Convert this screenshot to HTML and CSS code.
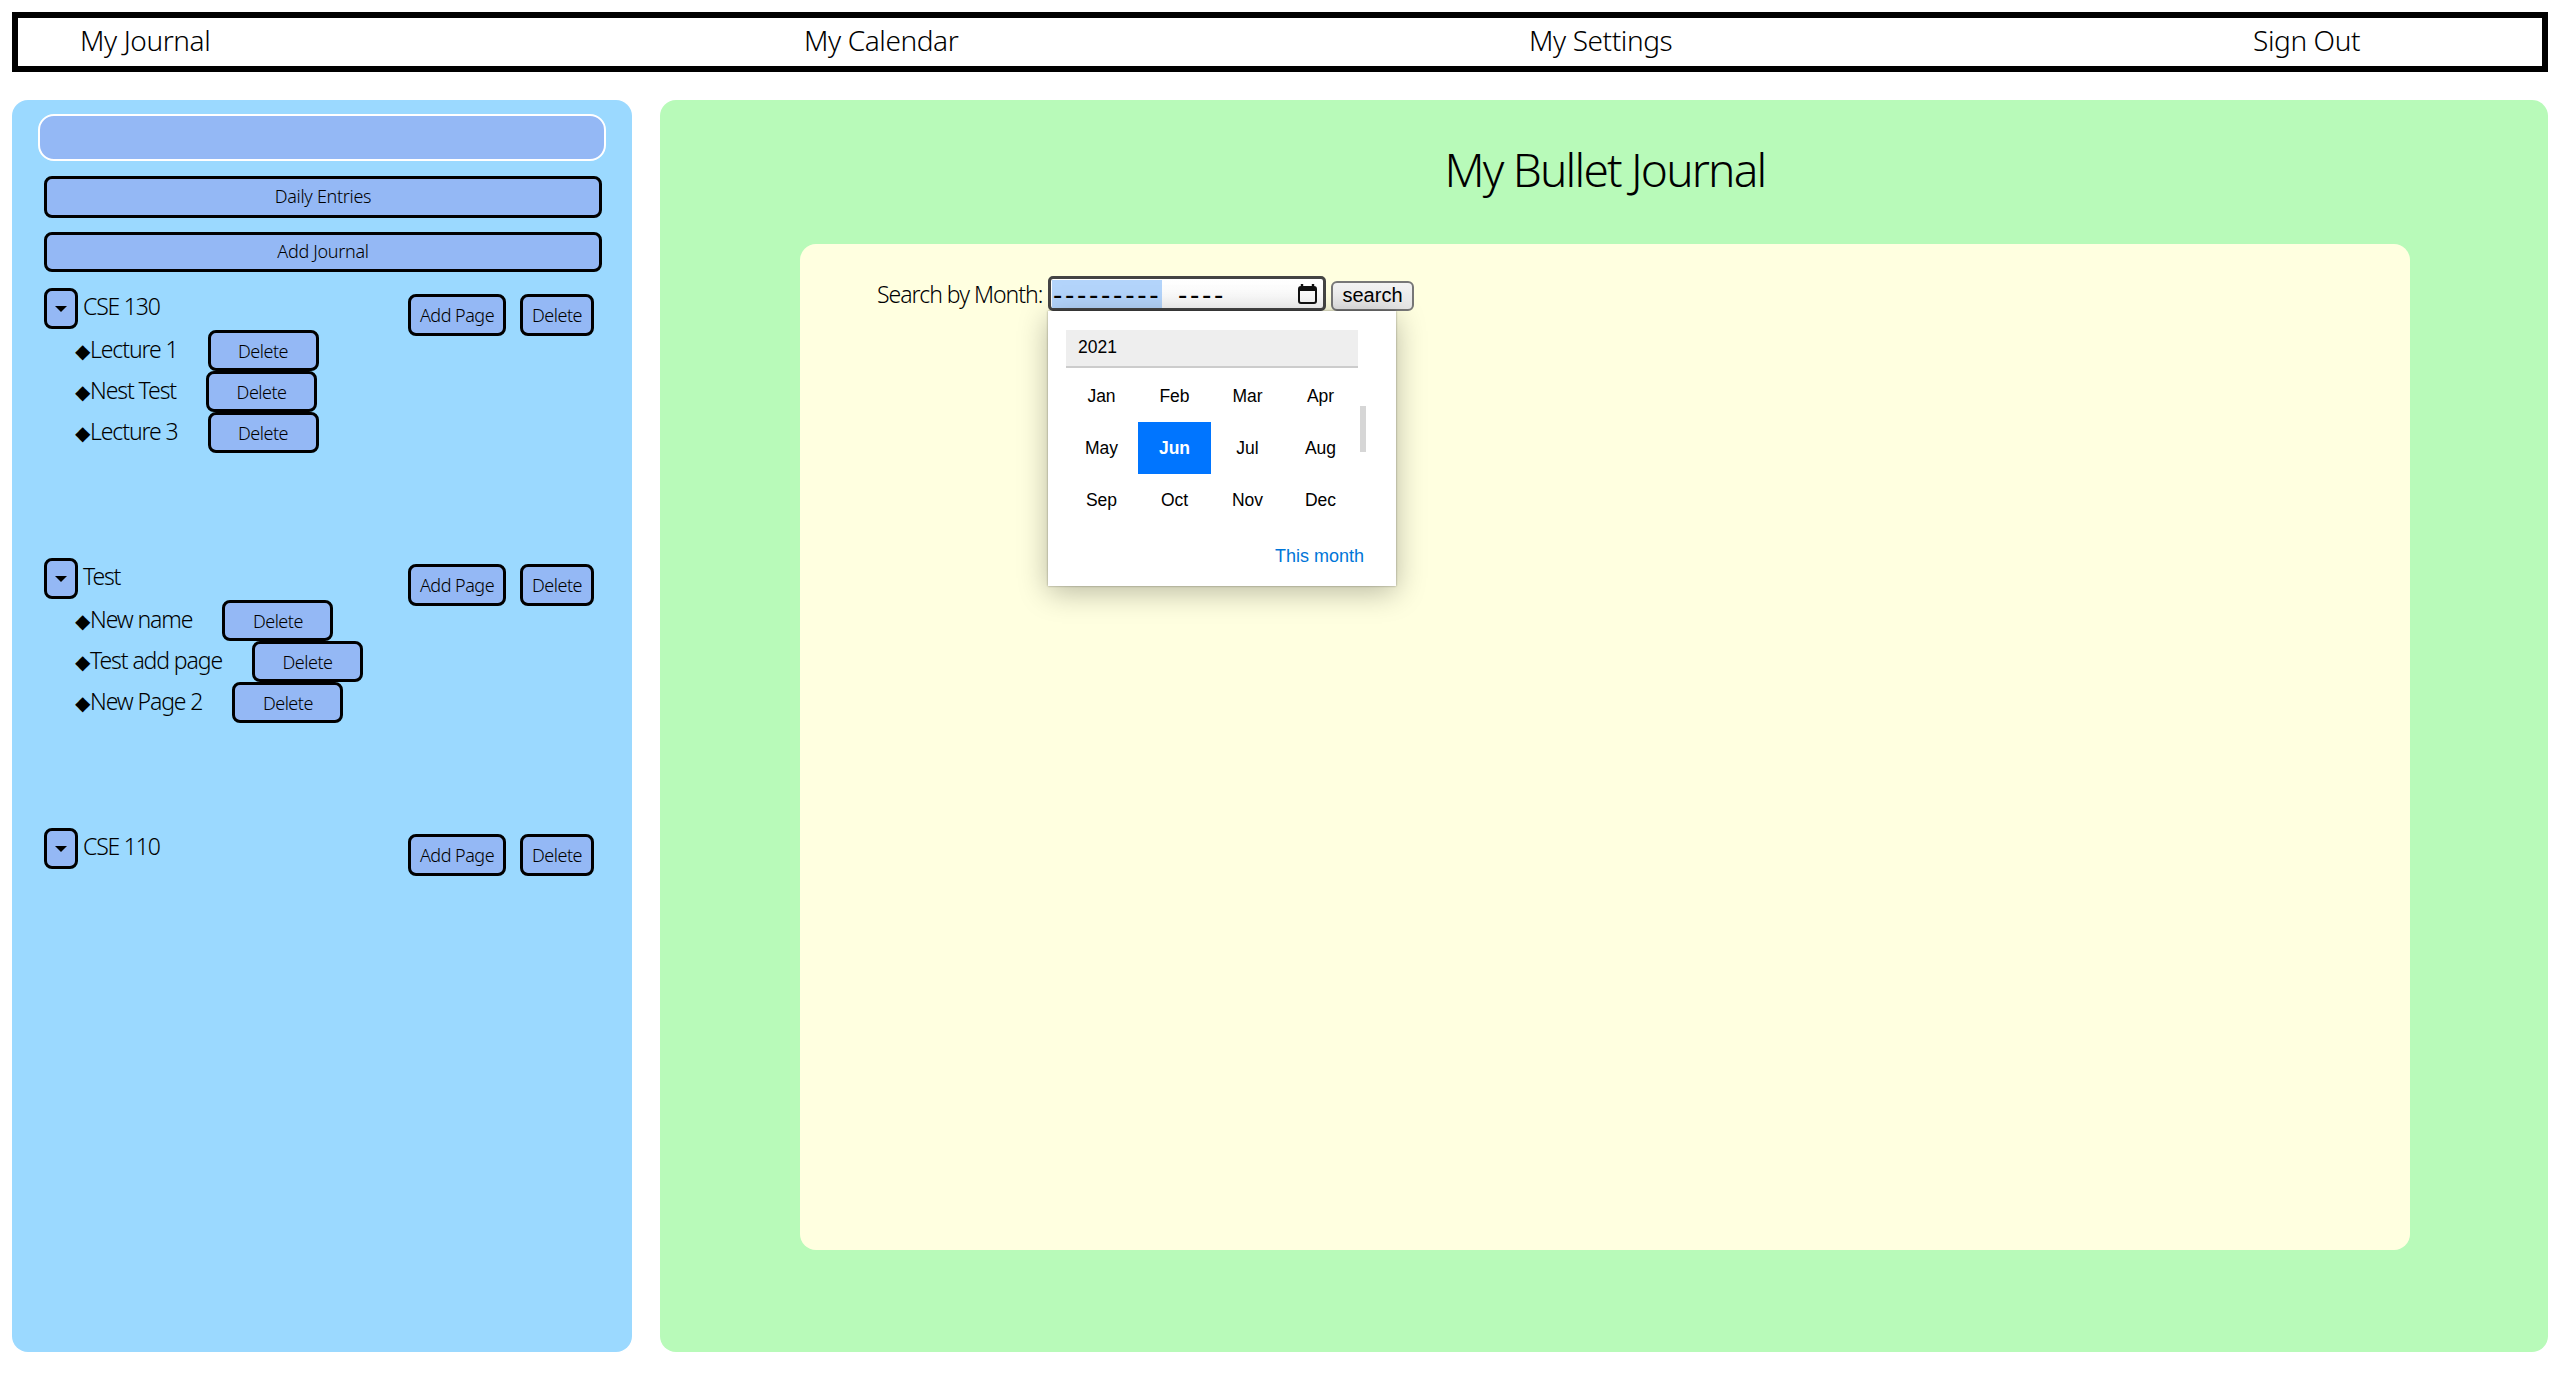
FILE: index.html
```html
<!DOCTYPE html>
<html>
<head>
	<title>My Bullet Journal</title>
	<link rel="stylesheet" href="styles.css">
</head>
<body>
	<nav class="topnav">
		<a>My Journal</a>
		<a>My Calendar</a>
		<a>My Settings</a>
		<a>Sign Out</a>
	</nav>
	<div class="content">
		<aside class="sidebar">
			<input class="sidebar-search" type="text">
			<button class="wide-btn first">Daily Entries</button>
			<button class="wide-btn">Add Journal</button>

			<section class="journal">
				<div class="journal-head">
					<button class="toggle"><span class="caret"></span></button>
					<span class="journal-name">CSE 130</span>
					<div class="journal-actions">
						<button class="small-btn add">Add Page</button>
						<button class="small-btn">Delete</button>
					</div>
				</div>
				<div class="page-row"><span class="page-name"><span class="bullet">◆</span>Lecture 1</span><button class="page-btn">Delete</button></div>
				<div class="page-row"><span class="page-name"><span class="bullet">◆</span>Nest Test</span><button class="page-btn">Delete</button></div>
				<div class="page-row"><span class="page-name"><span class="bullet">◆</span>Lecture 3</span><button class="page-btn">Delete</button></div>
			</section>

			<section class="journal">
				<div class="journal-head">
					<button class="toggle"><span class="caret"></span></button>
					<span class="journal-name">Test</span>
					<div class="journal-actions">
						<button class="small-btn add">Add Page</button>
						<button class="small-btn">Delete</button>
					</div>
				</div>
				<div class="page-row"><span class="page-name"><span class="bullet">◆</span>New name</span><button class="page-btn">Delete</button></div>
				<div class="page-row"><span class="page-name"><span class="bullet">◆</span>Test add page</span><button class="page-btn">Delete</button></div>
				<div class="page-row"><span class="page-name"><span class="bullet">◆</span>New Page 2</span><button class="page-btn">Delete</button></div>
			</section>

			<section class="journal">
				<div class="journal-head">
					<button class="toggle"><span class="caret"></span></button>
					<span class="journal-name">CSE 110</span>
					<div class="journal-actions">
						<button class="small-btn add">Add Page</button>
						<button class="small-btn">Delete</button>
					</div>
				</div>
			</section>
		</aside>

		<main class="journal-main">
			<h1>My Bullet Journal</h1>
			<div class="sheet">
				<div class="month-search">
					<label>Search by Month:</label>
					<div class="month-field">
						<div class="month-input">
							<span class="month-part">---------</span>
							<span class="year-part">----</span>
							<svg class="cal-icon" width="19" height="20" viewBox="0 0 19 20">
								<path d="M4 0v3M15 0v3" stroke="#111" stroke-width="2.4" fill="none"/>
								<rect x="1" y="3" width="17" height="16" rx="2" fill="none" stroke="#111" stroke-width="2"/>
								<rect x="1" y="3" width="17" height="4" fill="#111"/>
							</svg>
						</div>
						<div class="month-popup">
							<div class="popup-year">2021</div>
							<div class="popup-months">
								<span>Jan</span><span>Feb</span><span>Mar</span><span>Apr</span>
								<span>May</span><span class="selected">Jun</span><span>Jul</span><span>Aug</span>
								<span>Sep</span><span>Oct</span><span>Nov</span><span>Dec</span>
							</div>
							<div class="popup-foot">This month</div>
							<div class="popup-scroll"></div>
						</div>
					</div>
					<button class="search-btn">search</button>
				</div>
			</div>
		</main>
	</div>
</body>
</html>
```

FILE: styles.css
```css
* {
	box-sizing: border-box;
}

body {
	margin: 0;
	padding: 12px;
	font-family: "Noto Sans", sans-serif;
	font-weight: 300;
	color: #000;
	background-color: #fff;
}

button {
	font-family: inherit;
	font-weight: 350;
	color: #000;
	padding: 0;
	cursor: pointer;
}

.topnav {
	display: grid;
	grid-template-columns: 724px 725px 724px 1fr;
	align-items: center;
	height: 60px;
	padding: 0 0 4px 62px;
	border: 6px solid #000;
	font-size: 28px;
	letter-spacing: -0.4px;
}

.content {
	display: flex;
	gap: 28px;
	margin-top: 28px;
	height: 1252px;
}

.sidebar {
	width: 620px;
	flex: none;
	padding: 14px 38px 0 32px;
	background-color: #9bd9ff;
	border-radius: 16px;
}

.sidebar-search {
	display: block;
	width: 568px;
	height: 47px;
	margin-left: -6px;
	background-color: #94b8f5;
	border: 2px solid #fff;
	border-radius: 16px;
}

.wide-btn {
	display: block;
	width: 558px;
	height: 40px;
	margin-top: 14px;
	padding-bottom: 3px;
	background-color: #94b8f5;
	border: 3px solid #000;
	border-radius: 8px;
	font-size: 18px;
	letter-spacing: -0.3px;
}

.wide-btn.first {
	height: 42px;
	margin-top: 15px;
}

.journal {
	height: 270px;
}

.journal:first-of-type {
	margin-top: 16px;
}

.journal-head {
	display: flex;
	height: 42px;
}

.toggle {
	display: flex;
	align-items: center;
	justify-content: center;
	width: 34px;
	height: 41px;
	background-color: #94b8f5;
	border: 3px solid #000;
	border-radius: 8px;
}

.caret {
	width: 0;
	height: 0;
	border-left: 6px solid transparent;
	border-right: 6px solid transparent;
	border-top: 6px solid #000;
}

.journal-name {
	margin-left: 5px;
	font-size: 23px;
	line-height: 36px;
	letter-spacing: -1.2px;
}

.journal-actions {
	display: flex;
	gap: 14px;
	margin-left: auto;
	margin-top: 6px;
}

.small-btn {
	width: 74px;
	height: 42px;
	background-color: #94b8f5;
	border: 3px solid #000;
	border-radius: 8px;
	font-size: 18px;
	letter-spacing: -0.5px;
}

.small-btn.add {
	width: 98px;
}

.page-row {
	display: flex;
	align-items: center;
	gap: 30px;
	height: 41px;
	padding-left: 31px;
}

.page-name {
	margin-bottom: 3px;
	font-size: 23px;
	letter-spacing: -1.1px;
}

.bullet {
	font-family: "DejaVu Sans", sans-serif;
	font-size: 20px;
	line-height: 1;
	letter-spacing: 0;
}

.page-btn {
	width: 111px;
	height: 41px;
	background-color: #94b8f5;
	border: 3px solid #000;
	border-radius: 8px;
	font-size: 18px;
	letter-spacing: -0.5px;
}

.journal-main {
	flex: 1;
	padding: 0 138px 0 140px;
	background-color: #b8fab9;
	border-radius: 16px;
}

.journal-main h1 {
	margin: 0;
	height: 144px;
	padding-top: 34px;
	text-align: center;
	font-size: 46px;
	font-weight: 300;
	line-height: 70px;
	letter-spacing: -1.8px;
}

.sheet {
	height: 1006px;
	padding: 32px 0 0 77px;
	background-color: #ffffe0;
	border-radius: 16px;
}

.month-search {
	display: flex;
	align-items: center;
	height: 35px;
}

.month-search label {
	width: 171px;
	font-size: 23px;
	letter-spacing: -1px;
}

.month-field {
	position: relative;
	width: 278px;
	height: 35px;
}

.month-input {
	display: flex;
	align-items: center;
	height: 35px;
	padding-left: 1px;
	background: linear-gradient(#fff, #f7f7f7);
	border: 3px solid #444;
	border-radius: 5px;
	font-family: "Liberation Sans", Arial, sans-serif;
	font-weight: 400;
	font-size: 28px;
	letter-spacing: 2.7px;
}

.month-part {
	flex: none;
	width: 110px;
	height: 28px;
	padding: 2px 0 0 1px;
	line-height: 26px;
	white-space: nowrap;
	background-color: #b3d4fb;
}

.year-part {
	height: 28px;
	margin-left: 16px;
	padding-top: 2px;
	line-height: 26px;
}

.cal-icon {
	margin-left: auto;
	margin-right: 6px;
}

.month-popup {
	position: absolute;
	left: 0;
	top: 35px;
	z-index: 2;
	width: 348px;
	height: 275px;
	padding: 19px 38px 0 18px;
	background-color: #fff;
	box-shadow: 0 6px 28px rgba(0, 0, 0, 0.28), 0 0 2px rgba(0, 0, 0, 0.4);
	font-family: "Liberation Sans", Arial, sans-serif;
	font-weight: 400;
	font-size: 17.5px;
}

.popup-year {
	height: 38px;
	padding-left: 12px;
	line-height: 35px;
	background-color: #eee;
	border-bottom: 2px solid #ccc;
}

.popup-months {
	display: grid;
	grid-template-columns: repeat(4, 73px);
	grid-auto-rows: 52px;
	margin: 2px 0 0 -1px;
	text-align: center;
	line-height: 52px;
}

.popup-months .selected {
	background-color: #0075ff;
	color: #fff;
	font-weight: bold;
}

.popup-foot {
	margin: 20px -6px 0 0;
	text-align: right;
	color: #0075d8;
	font-size: 18px;
	line-height: 20px;
}

.popup-scroll {
	position: absolute;
	left: 312px;
	top: 95px;
	width: 6px;
	height: 46px;
	background-color: #d6d6d6;
}

.search-btn {
	width: 83px;
	height: 30px;
	margin: 4px 0 0 5px;
	background: linear-gradient(#f2f2f2, #e6e6e6);
	border: 2px solid #777;
	border-radius: 6px;
	font-family: "Liberation Sans", Arial, sans-serif;
	font-weight: 400;
	font-size: 20px;
}
```
